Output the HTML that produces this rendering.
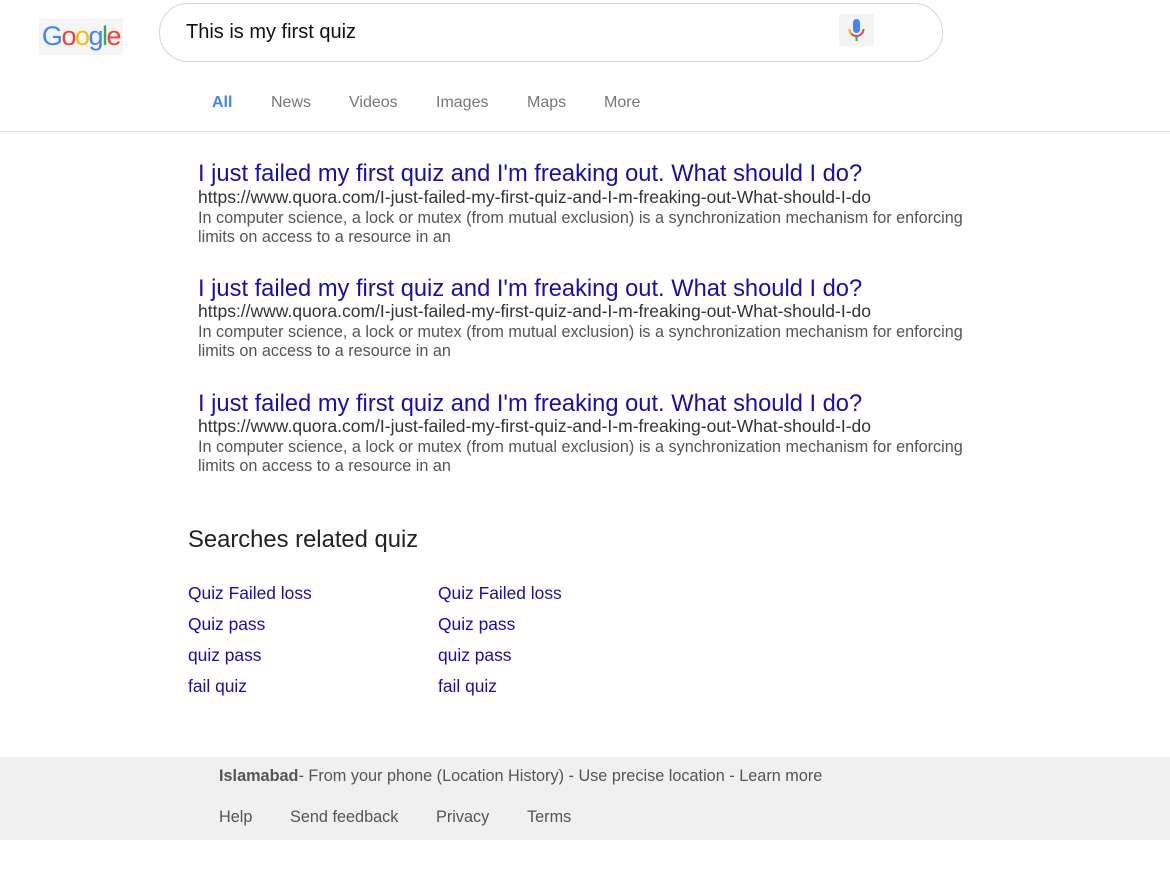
<!DOCTYPE html>
<html><head><meta charset="utf-8"><style>
body{margin:0;width:1170px;height:893px;background:#fff;font-family:"Liberation Sans",Arial,sans-serif;position:relative;overflow:hidden}
.a{position:absolute;white-space:nowrap}
.logo{left:39px;top:18px;width:84px;height:37px;background:#f5f5f5;font-size:27px;line-height:37px;text-align:center;letter-spacing:-1.5px}
.sb{left:159px;top:3px;width:782px;height:57px;border:1px solid #d6d6d6;border-radius:29px}
.nav{top:94px;font-size:16px;color:#777}
.t{font-size:23.7px;color:#1a0dab;left:198px}
.u{font-size:17.5px;color:#333;left:198px}
.d{font-size:16.2px;color:#545454;left:198px;line-height:19px}
.r{font-size:17.4px;color:#1a0dab}
.f{font-size:16.25px;color:#555}
</style></head><body>
<div class="a logo"><span style="color:#4285f4">G</span><span style="color:#ea4335">o</span><span style="color:#fbbc05">o</span><span style="color:#4285f4">g</span><span style="color:#34a853">l</span><span style="color:#ea4335">e</span></div>
<div class="a sb"></div>
<div class="a" style="left:186px;top:21px;font-size:20px;color:#111">This is my first quiz</div>
<div class="a" style="left:839px;top:14px;width:35px;height:32px;background:#f4f4f4"></div>
<svg class="a" style="left:846px;top:18px" width="22" height="27" viewBox="0 0 22 27"><rect x="7" y="1" width="7" height="14" rx="3.5" fill="#4285f4"/><path d="M3.5 11a7 7 0 0 0 14 0" stroke="#ea4335" stroke-width="2" fill="none"/><path d="M3.5 11a7 7 0 0 0 2 4.5" stroke="#fbbc05" stroke-width="2" fill="none"/><rect x="9.5" y="18" width="2" height="5" fill="#34a853"/></svg>
<div class="a nav" style="left:212px;color:#4285f4;font-weight:bold">All</div>
<div class="a nav" style="left:271px">News</div>
<div class="a nav" style="left:349px">Videos</div>
<div class="a nav" style="left:436px">Images</div>
<div class="a nav" style="left:527px">Maps</div>
<div class="a nav" style="left:604px">More</div>
<div class="a" style="left:0;top:131px;width:1170px;height:1px;background:#ddd"></div>

<div class="a t" style="top:161px">I just failed my first quiz and I'm freaking out. What should I do?</div>
<div class="a u" style="top:187px">https://www.quora.com/I-just-failed-my-first-quiz-and-I-m-freaking-out-What-should-I-do</div>
<div class="a d" style="top:209px">In computer science, a lock or mutex (from mutual exclusion) is a synchronization mechanism for enforcing<br>limits on access to a resource in an</div>

<div class="a t" style="top:276px">I just failed my first quiz and I'm freaking out. What should I do?</div>
<div class="a u" style="top:301px">https://www.quora.com/I-just-failed-my-first-quiz-and-I-m-freaking-out-What-should-I-do</div>
<div class="a d" style="top:323px">In computer science, a lock or mutex (from mutual exclusion) is a synchronization mechanism for enforcing<br>limits on access to a resource in an</div>

<div class="a t" style="top:391px">I just failed my first quiz and I'm freaking out. What should I do?</div>
<div class="a u" style="top:416px">https://www.quora.com/I-just-failed-my-first-quiz-and-I-m-freaking-out-What-should-I-do</div>
<div class="a d" style="top:438px">In computer science, a lock or mutex (from mutual exclusion) is a synchronization mechanism for enforcing<br>limits on access to a resource in an</div>

<div class="a" style="left:188px;top:526px;font-size:23.8px;color:#222">Searches related quiz</div>
<div class="a r" style="left:188px;top:583px">Quiz Failed loss</div>
<div class="a r" style="left:188px;top:614px">Quiz pass</div>
<div class="a r" style="left:188px;top:645px">quiz pass</div>
<div class="a r" style="left:188px;top:676px">fail quiz</div>
<div class="a r" style="left:438px;top:583px">Quiz Failed loss</div>
<div class="a r" style="left:438px;top:614px">Quiz pass</div>
<div class="a r" style="left:438px;top:645px">quiz pass</div>
<div class="a r" style="left:438px;top:676px">fail quiz</div>

<div class="a" style="left:0;top:757px;width:1170px;height:83px;background:#f0f0f0"></div>
<div class="a f" style="left:219px;top:767px"><b>Islamabad</b>- From your phone (Location History) - Use precise location - Learn more</div>
<div class="a f" style="left:219px;top:808px">Help</div>
<div class="a f" style="left:290px;top:808px">Send feedback</div>
<div class="a f" style="left:436px;top:808px">Privacy</div>
<div class="a f" style="left:527px;top:808px">Terms</div>
</body></html>
